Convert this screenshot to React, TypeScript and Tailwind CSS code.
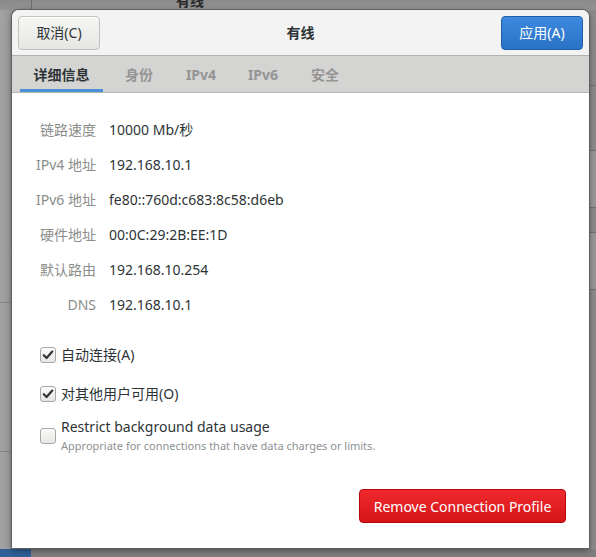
import React from 'react';

const FONT = { fontFamily: '"Noto Sans", "Noto Sans CJK SC", sans-serif' };

const details: [string, string][] = [
  ['链路速度', '10000 Mb/秒'],
  ['IPv4 地址', '192.168.10.1'],
  ['IPv6 地址', 'fe80::760d:c683:8c58:d6eb'],
  ['硬件地址', '00:0C:29:2B:EE:1D'],
  ['默认路由', '192.168.10.254'],
  ['DNS', '192.168.10.1'],
];

const tabs = ['详细信息', '身份', 'IPv4', 'IPv6', '安全'];

function CheckBox({ checked }: { checked: boolean }) {
  return (
    <span className="flex h-[16px] w-[16px] shrink-0 items-center justify-center rounded-[3px] border border-[#a8a8a5] bg-gradient-to-b from-[#fbfbfb] to-[#e6e6e4]">
      {checked && (
        <svg width="12" height="12" viewBox="0 0 12 12">
          <path d="M1.8 6.2 L4.6 9 L10.3 2.6" fill="none" stroke="#2e3436" strokeWidth="2.2" strokeLinecap="round" strokeLinejoin="round" />
        </svg>
      )}
    </span>
  );
}

export default function App() {
  return (
    <div className="relative h-[557px] w-[596px] overflow-hidden bg-[#8f8f8f]" style={FONT}>
      {/* parent window peeking out behind the dialog */}
      <div className="absolute left-0 top-0 h-[10px] w-[596px] bg-gradient-to-b from-[#8a8a8a] to-[#939393]" />
      <div className="absolute left-[31px] top-0 h-[10px] w-px bg-[#6e6e6e]" />
      <div className="absolute left-[176px] top-[-9px] text-[14px] font-bold leading-[20px] text-[#2a2a2a]">有线</div>
      <div className="absolute left-0 top-[10px] h-[540px] w-[12px] bg-gradient-to-r from-[#a3a3a3] to-[#989898]" />
      <div className="absolute left-0 top-[302px] h-px w-[12px] bg-[#858585]" />
      <div className="absolute left-0 top-[451px] h-px w-[12px] bg-[#858585]" />
      <div className="absolute right-0 top-[10px] h-[540px] w-[7px] bg-[#8a8a8a]" />
      <div className="absolute right-0 top-[85px] h-px w-[7px] bg-[#6f6f6f]" />
      <div className="absolute right-0 top-[150px] h-[57px] w-[7px] bg-[#979797]" />
      <div className="absolute right-0 top-[150px] h-px w-[7px] bg-[#6f6f6f]" />
      <div className="absolute right-0 top-[207px] h-px w-[7px] bg-[#6f6f6f]" />
      <div className="absolute right-0 top-[232px] h-[57px] w-[7px] bg-[#979797]" />
      <div className="absolute right-0 top-[232px] h-px w-[7px] bg-[#6f6f6f]" />
      <div className="absolute right-0 top-[289px] h-px w-[7px] bg-[#6f6f6f]" />
      <div className="absolute bottom-0 left-0 h-[8px] w-[596px] bg-[#7e7e7e]" />
      <div className="absolute bottom-0 left-0 h-[8px] w-[31px] bg-[#2e5f96]" />

      {/* dialog */}
      <div className="relative ml-[12px] mt-[10px] flex h-[538px] w-[577px] flex-col overflow-hidden rounded-t-[7px] bg-white shadow-[0_0_0_1px_#5f5f5f,0_2px_6px_rgba(0,0,0,0.45)]">
        {/* header bar */}
        <div className="flex h-[46px] shrink-0 items-center justify-between border-b border-[#b2b2af] bg-[#f3f3f3] px-[6px]">
          <button className="flex h-[34px] w-[82px] items-center justify-center rounded-[4px] border border-[#c4c1bd] bg-gradient-to-b from-[#f6f6f5] to-[#e6e6e4] text-[14px] text-[#2e3436] shadow-[inset_0_1px_0_#ffffff]">
            取消(C)
          </button>
          <div className="text-[14px] font-bold text-[#2e3436]">有线</div>
          <button className="flex h-[34px] w-[82px] items-center justify-center rounded-[4px] border border-[#1c5ea8] bg-gradient-to-b from-[#3d8ade] to-[#2a72c6] text-[14px] text-white">
            应用(A)
          </button>
        </div>

        {/* tab strip */}
        <div className="flex h-[37px] shrink-0 items-stretch gap-[10px] border-b border-[#b6b6b3] bg-[#d4d4d2] pl-[8px]">
          {tabs.map((t, i) => (
            <div
              key={t}
              className={
                i === 0
                  ? 'flex w-[83px] items-center justify-center border-b-[3px] border-[#4a90d9] pt-[3px] text-[14px] font-bold text-[#2e3436]'
                  : 'flex w-[52px] items-center justify-center border-b-[3px] border-transparent pt-[3px] text-[14px] font-bold text-[#959595]'
              }
            >
              {t}
            </div>
          ))}
        </div>

        {/* details */}
        <div className="flex flex-1 flex-col pt-[19px]">
          {details.map(([k, v]) => (
            <div key={k} className="flex h-[35px] items-center gap-[13px]">
              <div className="w-[84px] text-right text-[14px] text-[#8b8d8a]">{k}</div>
              <div className="text-[14px] text-[#2e3436]">{v}</div>
            </div>
          ))}

          <div className="mt-[13px] flex flex-col pl-[28px]">
            <label className="flex h-[39px] items-center gap-[5px] text-[14px] text-[#2e3436]">
              <CheckBox checked />
              <span>自动连接(A)</span>
            </label>
            <label className="flex h-[39px] items-center gap-[5px] text-[14px] text-[#2e3436]">
              <CheckBox checked />
              <span>对其他用户可用(O)</span>
            </label>
            <label className="mt-[4px] flex items-center gap-[5px]">
              <CheckBox checked={false} />
              <span className="flex flex-col">
                <span className="text-[14px] leading-[20px] text-[#2e3436]">Restrict background data usage</span>
                <span className="text-[11px] leading-[17px] text-[#8e9193]">
                  Appropriate for connections that have data charges or limits.
                </span>
              </span>
            </label>
          </div>

          <div className="mt-auto flex justify-end pb-[25px] pr-[23px]">
            <button className="flex h-[34px] w-[207px] items-center justify-center rounded-[4px] border border-[#b3080e] bg-gradient-to-b from-[#f0292d] to-[#d51417] text-[14px] text-white">
              Remove Connection Profile
            </button>
          </div>
        </div>
      </div>
    </div>
  );
}
